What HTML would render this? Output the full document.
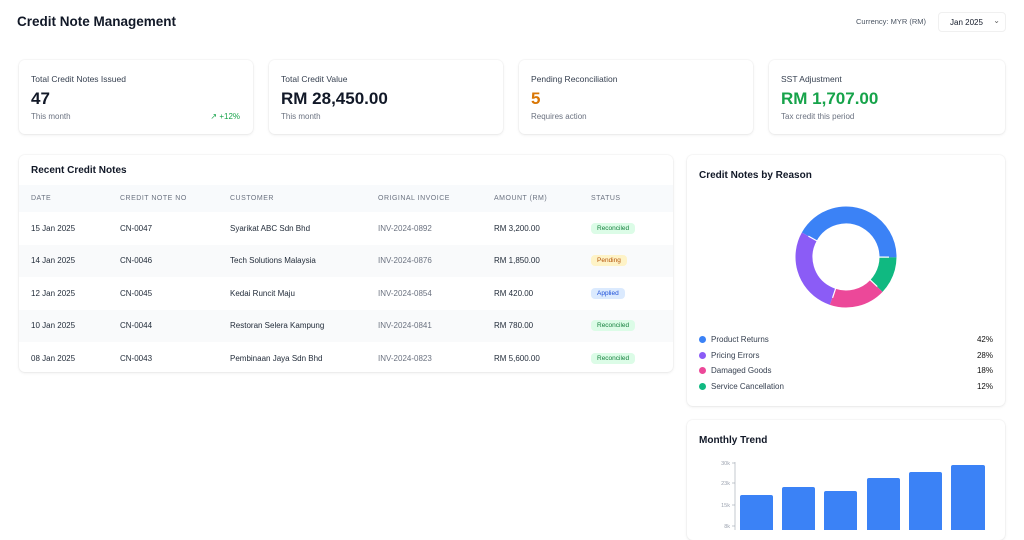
<!DOCTYPE html>
<html><head><meta charset="utf-8"><style>
*{box-sizing:border-box;margin:0;padding:0}
body{width:1024px;height:530px;overflow:hidden;background:#fff;font-family:"Liberation Sans",sans-serif;color:#111827;position:relative}
.abs{position:absolute}
.card{position:absolute;background:#fff;border-radius:6px;box-shadow:0 1px 3px rgba(0,0,0,.08),0 0 0 1px rgba(0,0,0,.025)}
.kl{position:absolute;left:12px;top:14px;font-size:8.5px;color:#374151}
.kv{position:absolute;left:12px;top:29px;font-size:17px;font-weight:bold}
.ks{position:absolute;left:12px;top:52px;font-size:8px;color:#6b7280}
table{border-collapse:collapse;width:654px;font-size:8px}
th{font-weight:normal;color:#6b7280;text-align:left;font-size:7px;letter-spacing:.5px;height:27px;background:#f8fafc}
td{height:32.5px;color:#1f2937}
tr:nth-child(odd) td{background:#f9fafb}
.b{display:inline-block;font-size:6.5px;padding:2px 6px;border-radius:4px}
.g{background:#dcfce7;color:#15803d}.y{background:#fef3c7;color:#b45309}.bl{background:#dbeafe;color:#1d4ed8}
.leg{position:absolute;left:12px;font-size:8px;color:#374151}
.leg i{display:inline-block;width:7px;height:7px;border-radius:50%;margin-right:5px;vertical-align:-1px}
.pc{position:absolute;right:12px;font-size:8px;color:#111}
</style></head><body>
<div class="abs" style="left:17px;top:14px;font-size:13.5px;font-weight:bold">Credit Note Management</div>
<div class="abs" style="left:856px;top:17px;font-size:7.5px;color:#4b5563">Currency: MYR (RM)</div>
<div class="abs" style="left:938px;top:12px;width:68px;height:20px;border:1px solid #f0f0f0;border-radius:4px;font-size:8px;padding:5px 0 0 11px">Jan 2025<span style="position:absolute;right:5px;top:3px;font-size:8px;color:#666">⌄</span></div>

<div class="card" style="left:19px;top:60px;width:234px;height:74px"><div class="kl">Total Credit Notes Issued</div><div class="kv">47</div><div class="ks">This month</div><div style="position:absolute;right:13px;top:52px;font-size:8px;color:#16a34a">↗ +12%</div></div>
<div class="card" style="left:269px;top:60px;width:234px;height:74px"><div class="kl">Total Credit Value</div><div class="kv">RM 28,450.00</div><div class="ks">This month</div></div>
<div class="card" style="left:519px;top:60px;width:234px;height:74px"><div class="kl">Pending Reconciliation</div><div class="kv" style="color:#d97706">5</div><div class="ks">Requires action</div></div>
<div class="card" style="left:769px;top:60px;width:236px;height:74px"><div class="kl">SST Adjustment</div><div class="kv" style="color:#16a34a">RM 1,707.00</div><div class="ks">Tax credit this period</div></div>

<div class="card" style="left:19px;top:155px;width:654px;height:217px;overflow:hidden">
<div style="position:absolute;left:12px;top:10px;font-size:10px;font-weight:bold">Recent Credit Notes</div>
<table style="position:absolute;top:30px;left:0">
<tr><th style="padding-left:12px;width:101px">DATE</th><th style="width:110px">CREDIT NOTE NO</th><th style="width:148px">CUSTOMER</th><th style="width:116px">ORIGINAL INVOICE</th><th style="width:97px">AMOUNT (RM)</th><th>STATUS</th></tr>
<tr><td style="padding-left:12px">15 Jan 2025</td><td>CN-0047</td><td>Syarikat ABC Sdn Bhd</td><td style="color:#6b7280">INV-2024-0892</td><td>RM 3,200.00</td><td><span class="b g">Reconciled</span></td></tr>
<tr><td style="padding-left:12px">14 Jan 2025</td><td>CN-0046</td><td>Tech Solutions Malaysia</td><td style="color:#6b7280">INV-2024-0876</td><td>RM 1,850.00</td><td><span class="b y">Pending</span></td></tr>
<tr><td style="padding-left:12px">12 Jan 2025</td><td>CN-0045</td><td>Kedai Runcit Maju</td><td style="color:#6b7280">INV-2024-0854</td><td>RM 420.00</td><td><span class="b bl">Applied</span></td></tr>
<tr><td style="padding-left:12px">10 Jan 2025</td><td>CN-0044</td><td>Restoran Selera Kampung</td><td style="color:#6b7280">INV-2024-0841</td><td>RM 780.00</td><td><span class="b g">Reconciled</span></td></tr>
<tr><td style="padding-left:12px">08 Jan 2025</td><td>CN-0043</td><td>Pembinaan Jaya Sdn Bhd</td><td style="color:#6b7280">INV-2024-0823</td><td>RM 5,600.00</td><td><span class="b g">Reconciled</span></td></tr>
</table></div>

<div class="card" style="left:687px;top:155px;width:318px;height:251px">
<div style="position:absolute;left:12px;top:15px;font-size:10px;font-weight:bold">Credit Notes by Reason</div>
<svg class="abs" style="left:104px;top:47px" width="110" height="110" viewBox="-5 -5 110 110">
<g transform="rotate(-151 50 50)" fill="none" stroke-width="17">
<circle cx="50" cy="50" r="42" stroke="#3b82f6" stroke-dasharray="110.8 263.9" stroke-dashoffset="0"/>
<circle cx="50" cy="50" r="42" stroke="#10b981" stroke-dasharray="31.7 263.9" stroke-dashoffset="-110.8"/>
<circle cx="50" cy="50" r="42" stroke="#ec4899" stroke-dasharray="47.5 263.9" stroke-dashoffset="-142.5"/>
<circle cx="50" cy="50" r="42" stroke="#8b5cf6" stroke-dasharray="73.9 263.9" stroke-dashoffset="-190"/>
</g>
<g transform="rotate(-151 50 50)" stroke="#fff" stroke-width="1.2">
<line x1="58" y1="50" x2="93" y2="50" transform="rotate(0 50 50)"/>
<line x1="58" y1="50" x2="93" y2="50" transform="rotate(151.2 50 50)"/>
<line x1="58" y1="50" x2="93" y2="50" transform="rotate(194.4 50 50)"/>
<line x1="58" y1="50" x2="93" y2="50" transform="rotate(259.2 50 50)"/>
</g></svg>
<div class="leg" style="top:180px"><i style="background:#3b82f6"></i>Product Returns</div><div class="pc" style="top:180px">42%</div>
<div class="leg" style="top:196px"><i style="background:#8b5cf6"></i>Pricing Errors</div><div class="pc" style="top:196px">28%</div>
<div class="leg" style="top:211px"><i style="background:#ec4899"></i>Damaged Goods</div><div class="pc" style="top:211px">18%</div>
<div class="leg" style="top:227px"><i style="background:#10b981"></i>Service Cancellation</div><div class="pc" style="top:227px">12%</div>
</div>

<div class="card" style="left:687px;top:420px;width:318px;height:120px">
<div style="position:absolute;left:12px;top:15px;font-size:10px;font-weight:bold">Monthly Trend</div>
</div>
<svg class="abs" style="left:687px;top:455px" width="318" height="75">
<g font-size="5.5" fill="#9ca3af" text-anchor="end" font-family="Liberation Sans">
<text x="43" y="10">30k</text><text x="43" y="30">23k</text><text x="43" y="52">15k</text><text x="43" y="73">8k</text></g>
<g stroke="#9ca3af" stroke-width=".6"><line x1="48" y1="7" x2="48" y2="75"/><line x1="45" y1="8" x2="48" y2="8"/><line x1="45" y1="28" x2="48" y2="28"/><line x1="45" y1="50" x2="48" y2="50"/><line x1="45" y1="71" x2="48" y2="71"/></g>
<g fill="#3b82f6">
<rect x="53" y="40" width="33" height="40" rx="2"/><rect x="95" y="32" width="33" height="48" rx="2"/><rect x="137" y="36" width="33" height="44" rx="2"/><rect x="180" y="23" width="33" height="57" rx="2"/><rect x="222" y="17" width="33" height="63" rx="2"/><rect x="264" y="10" width="34" height="70" rx="2"/></g>
</svg>
</body></html>
